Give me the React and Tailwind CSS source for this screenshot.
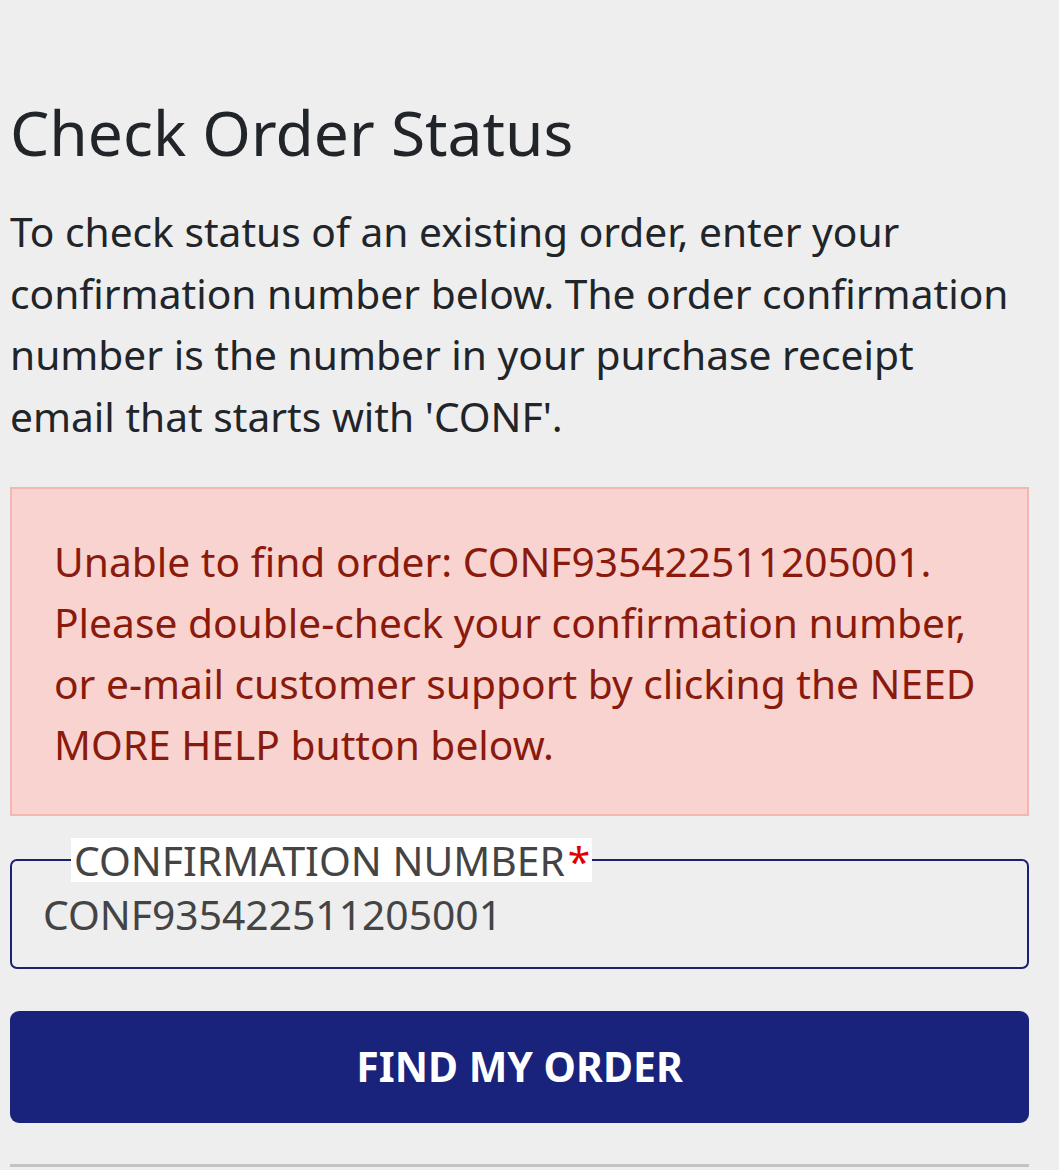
export default function App() {
  return (
    <div className="min-h-[1170px] bg-[#eeeeee] pl-[10px] pr-[30px] pt-[94px] font-['Noto_Sans',sans-serif] text-[#212529]">
      <h1 className="text-[62.3px] leading-[76px] font-normal">Check Order Status</h1>

      <p className="mt-[31px] text-[40.7px] leading-[61.5px]">
        To check status of an existing order, enter your confirmation number below. The order confirmation number is the number in your purchase receipt email that starts with 'CONF'.
      </p>

      <div className="mt-[40px] border-2 border-[#f4b6b1] bg-[#f9d3d0] pl-[42px] pr-[20px] pt-[42px] pb-[39px] text-[40.7px] leading-[61px] text-[#8a1a0c]">
        Unable to find order: CONF935422511205001. Please double-check your confirmation number, or e-mail customer support by clicking the NEED MORE HELP button below.
      </div>

      <div className="relative mt-[43px] h-[110px] rounded-[7px] border-2 border-[#1b2070]">
        <div className="absolute left-[59px] top-[-23px] flex items-center bg-white pl-[3px] pr-[2px] text-[40.8px] leading-[44px] text-[#444444]">
          CONFIRMATION NUMBER<span className="ml-[3px] text-[#e00000]">*</span>
        </div>
        <div className="pl-[31px] pt-[28px] text-[40.8px] leading-[50px] text-[#444444]">CONF935422511205001</div>
      </div>

      <button className="mt-[42px] flex h-[112px] w-full items-center justify-center rounded-[9px] bg-[#19237b] text-[41px] font-bold text-white">
        FIND MY ORDER
      </button>

      <div className="mt-[41px] h-[3px] bg-[#c4c4c4]" />
    </div>
  )
}
